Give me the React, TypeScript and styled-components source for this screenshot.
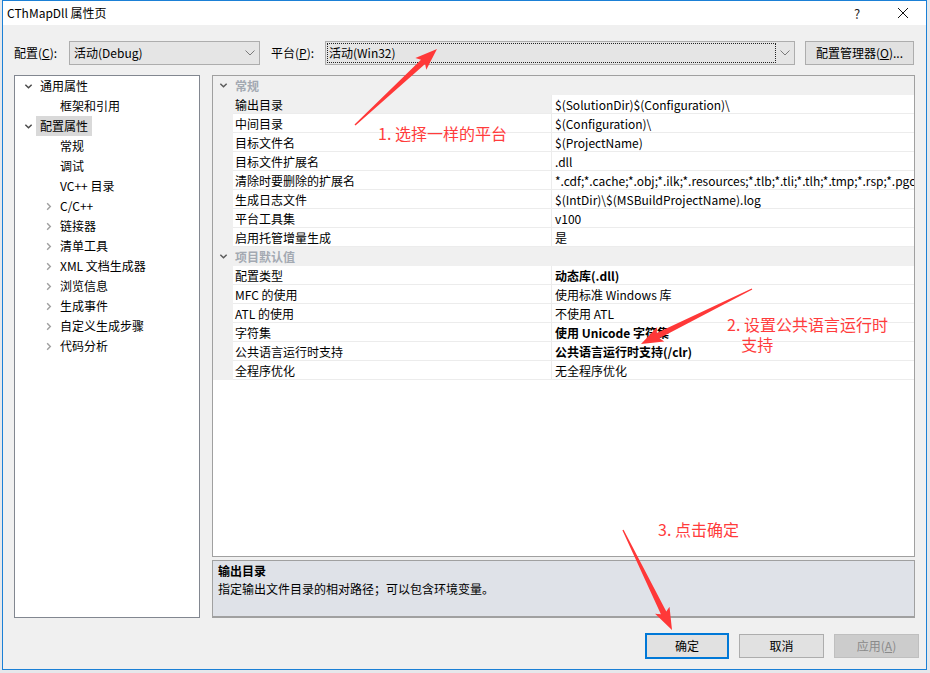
import React from 'react';
import styled, { createGlobalStyle } from 'styled-components';

// Global page setup
const GlobalStyle = createGlobalStyle`
  html, body {
    margin: 0;
    padding: 0;
    background: #e6e8eb;
  }
  body {
    font-family: "Noto Sans CJK SC", "Noto Sans", sans-serif;
    font-size: 12px;
    color: #000;
  }
`;

interface TreeNode {
  label: React.ReactNode;
  level: number;
  arrow?: 'open' | 'closed';
  selected?: boolean;
}

interface PropRow {
  name: string;
  value: string;
  bold?: boolean;
  selected?: boolean;
}

interface Section {
  title: string;
  rows: PropRow[];
}

const TREE: TreeNode[] = [
  { label: '通用属性', level: 0, arrow: 'open' },
  { label: '框架和引用', level: 1 },
  { label: '配置属性', level: 0, arrow: 'open', selected: true },
  { label: '常规', level: 1 },
  { label: '调试', level: 1 },
  { label: 'VC++ 目录', level: 1 },
  { label: 'C/C++', level: 1, arrow: 'closed' },
  { label: '链接器', level: 1, arrow: 'closed' },
  { label: '清单工具', level: 1, arrow: 'closed' },
  { label: 'XML 文档生成器', level: 1, arrow: 'closed' },
  { label: '浏览信息', level: 1, arrow: 'closed' },
  { label: '生成事件', level: 1, arrow: 'closed' },
  { label: '自定义生成步骤', level: 1, arrow: 'closed' },
  { label: '代码分析', level: 1, arrow: 'closed' },
];

const SECTIONS: Section[] = [
  {
    title: '常规',
    rows: [
      { name: '输出目录', value: '$(SolutionDir)$(Configuration)\\', selected: true },
      { name: '中间目录', value: '$(Configuration)\\' },
      { name: '目标文件名', value: '$(ProjectName)' },
      { name: '目标文件扩展名', value: '.dll' },
      {
        name: '清除时要删除的扩展名',
        value: '*.cdf;*.cache;*.obj;*.ilk;*.resources;*.tlb;*.tli;*.tlh;*.tmp;*.rsp;*.pgc;*.pgd;*.meta;$(TargetPath)',
      },
      { name: '生成日志文件', value: '$(IntDir)\\$(MSBuildProjectName).log' },
      { name: '平台工具集', value: 'v100' },
      { name: '启用托管增量生成', value: '是' },
    ],
  },
  {
    title: '项目默认值',
    rows: [
      { name: '配置类型', value: '动态库(.dll)', bold: true },
      { name: 'MFC 的使用', value: '使用标准 Windows 库' },
      { name: 'ATL 的使用', value: '不使用 ATL' },
      { name: '字符集', value: '使用 Unicode 字符集', bold: true },
      { name: '公共语言运行时支持', value: '公共语言运行时支持(/clr)', bold: true },
      { name: '全程序优化', value: '无全程序优化' },
    ],
  },
];

// Layout
const Page = styled.div`
  position: relative;
  width: 930px;
  height: 673px;
  overflow: hidden;
`;

const Window = styled.div`
  margin-left: 2px;
  width: 925px;
  height: 670px;
  box-sizing: border-box;
  border: 1px solid #1b80d6;
  background: #f0f0f0;
  display: flex;
  flex-direction: column;
`;

const TitleBar = styled.div`
  height: 24px;
  background: #fff;
  display: flex;
  align-items: center;
  padding-left: 4px;
`;

const TitleText = styled.span`
  flex: 1;
  font-size: 12px;
  padding-bottom: 2px;
`;

const TitleButton = styled.div`
  width: 46px;
  height: 24px;
  display: flex;
  align-items: center;
  justify-content: center;
  font-size: 13px;
  color: #222;
`;

const Client = styled.div`
  flex: 1;
  display: flex;
  flex-direction: column;
  padding: 0 7px 0 11px;
`;

const Toolbar = styled.div`
  margin-top: 16px;
  height: 24px;
  display: flex;
  align-items: center;
`;

const FieldLabel = styled.span<{ $w: number; $ml?: number }>`
  width: ${p => p.$w}px;
  margin-left: ${p => p.$ml ?? 0}px;
  padding-bottom: 2px;
  white-space: nowrap;
`;

const Combo = styled.div<{ $w: number }>`
  width: ${p => p.$w}px;
  height: 24px;
  box-sizing: border-box;
  border: 1px solid #adadad;
  background: #e5e5e5;
  display: flex;
  align-items: center;
`;

const ComboText = styled.div<{ $focus?: boolean }>`
  flex: 1;
  height: ${p => (p.$focus ? '20px' : 'auto')};
  box-sizing: border-box;
  margin: ${p => (p.$focus ? '0 0 0 1px' : '0')};
  padding-left: ${p => (p.$focus ? '1px' : '4px')};
  padding-bottom: 1px;
  border: ${p => (p.$focus ? '1px dotted #222' : 'none')};
  display: flex;
  align-items: center;
  white-space: nowrap;
`;

const ComboArrow = styled.div`
  width: 18px;
  display: flex;
  align-items: center;
  justify-content: center;
`;

const PushButton = styled.div<{ $w: number; $variant?: 'default' | 'disabled' }>`
  width: ${p => p.$w}px;
  height: ${p => (p.$variant === 'default' ? 26 : 24)}px;
  box-sizing: border-box;
  padding-bottom: 2px;
  border: ${p =>
    p.$variant === 'default' ? '2px solid #0078d7' : p.$variant === 'disabled' ? '1px solid #bfbfbf' : '1px solid #adadad'};
  background: ${p => (p.$variant === 'disabled' ? '#cccccc' : '#e1e1e1')};
  color: ${p => (p.$variant === 'disabled' ? '#8a8a8a' : '#000')};
  display: flex;
  align-items: center;
  justify-content: center;
  white-space: nowrap;
`;

const ManagerButton = styled(PushButton)`
  margin-left: 10px;
`;

const Main = styled.div`
  margin-top: 10px;
  height: 543px;
  width: 901px;
  display: flex;
  gap: 12px;
`;

// Tree
const TreePanel = styled.div`
  width: 186px;
  box-sizing: border-box;
  border: 1px solid #828790;
  background: #fff;
`;

const TreeRow = styled.div<{ $level: number }>`
  height: 20px;
  display: flex;
  align-items: center;
  padding-left: ${p => 5 + p.$level * 20}px;
`;

const TreeArrow = styled.div`
  width: 16px;
  height: 20px;
  display: flex;
  align-items: center;
  justify-content: center;
`;

const TreeLabel = styled.div<{ $selected?: boolean }>`
  height: 20px;
  box-sizing: border-box;
  padding: 0 4px 1px;
  display: flex;
  align-items: center;
  white-space: nowrap;
  background: ${p => (p.$selected ? '#d9d9d9' : 'transparent')};
`;

// Property grid
const RightCol = styled.div`
  width: 703px;
  display: flex;
  flex-direction: column;
`;

const GridPanel = styled.div`
  height: 482px;
  box-sizing: border-box;
  border: 1px solid #a0a0a0;
  background: #fff;
  overflow: hidden;
`;

const CategoryRow = styled.div`
  height: 19px;
  display: flex;
  align-items: center;
  background: #f0f0f0;
`;

const Margin = styled.div`
  width: 20px;
  height: 100%;
  flex: none;
  display: flex;
  align-items: center;
  justify-content: center;
  background: #f0f0f0;
`;

const CategoryTitle = styled.span`
  padding-left: 2px;
  padding-bottom: 1px;
  color: #a3a9b2;
  font-weight: 700;
`;

const PropLine = styled.div`
  height: 19px;
  display: flex;
`;

const NameCell = styled.div<{ $selected?: boolean }>`
  width: 319px;
  flex: none;
  box-sizing: border-box;
  padding-left: 2px;
  border-right: 1px solid #ececec;
  border-bottom: 1px solid #ececec;
  background: ${p => (p.$selected ? '#f0f0f0' : '#fff')};
  display: flex;
  align-items: center;
  white-space: nowrap;
`;

const ValueCell = styled.div<{ $bold?: boolean }>`
  flex: 1;
  min-width: 0;
  box-sizing: border-box;
  padding-left: 3px;
  border-bottom: 1px solid #ececec;
  display: flex;
  align-items: center;
  white-space: nowrap;
  overflow: hidden;
  font-weight: ${p => (p.$bold ? 700 : 400)};
`;

const DescPanel = styled.div`
  margin-top: 3px;
  height: 58px;
  box-sizing: border-box;
  border: 1px solid #a0a0a0;
  border-bottom-width: 2px;
  background: #dfe2e8;
  padding: 1px 5px;
`;

const DescTitle = styled.div`
  font-weight: 700;
  line-height: 18px;
`;

const DescText = styled.div`
  line-height: 18px;
`;

const ButtonRow = styled.div`
  margin-top: 15px;
  display: flex;
  justify-content: flex-end;
  align-items: center;
  gap: 10px;
`;

// Annotations (overlay)
const Overlay = styled.svg`
  position: absolute;
  left: 0;
  top: 0;
  width: 930px;
  height: 673px;
  pointer-events: none;
`;

const Note = styled.div<{ $x: number; $y: number }>`
  position: absolute;
  left: ${p => p.$x}px;
  top: ${p => p.$y}px;
  color: #ff3c3c;
  font-size: 16px;
  line-height: 20px;
  white-space: pre;
`;

const Chevron: React.FC<{ dir: 'down' | 'right'; color: string; size?: number }> = ({ dir, color, size = 9 }) => (
  <svg width={size} height={size} viewBox="0 0 10 10">
    {dir === 'down' ? (
      <polyline points="1.5,3 5,6.5 8.5,3" fill="none" stroke={color} strokeWidth="1.6" />
    ) : (
      <polyline points="3.5,1.5 7,5 3.5,8.5" fill="none" stroke={color} strokeWidth="1.6" />
    )}
  </svg>
);

const ComboChevron = () => (
  <svg width="10" height="6" viewBox="0 0 10 6">
    <polyline points="0.5,0.5 5,5 9.5,0.5" fill="none" stroke="#7a7a7a" strokeWidth="1" />
  </svg>
);

// tapered annotation arrow from tail to tip
function arrowPoints(tx: number, ty: number, px: number, py: number) {
  const head = 22;
  const barb = 8;
  const neck = 3;
  const tail = 0.7;
  const len = Math.hypot(px - tx, py - ty);
  const ux = (px - tx) / len;
  const uy = (py - ty) / len;
  const nx = -uy;
  const ny = ux;
  const hx = px - ux * (head - 3);
  const hy = py - uy * (head - 3);
  const bx = px - ux * head;
  const by = py - uy * head;
  const pts = [
    [tx + nx * tail, ty + ny * tail],
    [hx + nx * neck, hy + ny * neck],
    [bx + nx * barb, by + ny * barb],
    [px, py],
    [bx - nx * barb, by - ny * barb],
    [hx - nx * neck, hy - ny * neck],
    [tx - nx * tail, ty - ny * tail],
  ];
  return pts.map(p => `${p[0].toFixed(1)},${p[1].toFixed(1)}`).join(' ');
}

const ARROWS = [
  [355, 125, 437, 49],
  [752, 289, 641, 344],
  [623, 530, 672, 630],
];

const App: React.FC = () => {
  return (
    <Page>
      <GlobalStyle />
      <Window>
        <TitleBar>
          <TitleText>CThMapDll 属性页</TitleText>
          <TitleButton>?</TitleButton>
          <TitleButton>
            <svg width="12" height="12" viewBox="0 0 12 12">
              <path d="M1 1 L11 11 M11 1 L1 11" stroke="#111" strokeWidth="1" fill="none" />
            </svg>
          </TitleButton>
        </TitleBar>

        <Client>
          <Toolbar>
            <FieldLabel $w={55}>
              配置(<u>C</u>):
            </FieldLabel>
            <Combo $w={191}>
              <ComboText>活动(Debug)</ComboText>
              <ComboArrow>
                <ComboChevron />
              </ComboArrow>
            </Combo>
            <FieldLabel $w={54} $ml={11}>
              平台(<u>P</u>):
            </FieldLabel>
            <Combo $w={470}>
              <ComboText $focus>活动(Win32)</ComboText>
              <ComboArrow>
                <ComboChevron />
              </ComboArrow>
            </Combo>
            <ManagerButton $w={109}>
              配置管理器(<u>O</u>)...
            </ManagerButton>
          </Toolbar>

          <Main>
            <TreePanel>
              {TREE.map((node, i) => (
                <TreeRow key={i} $level={node.level}>
                  <TreeArrow>
                    {node.arrow === 'open' && <Chevron dir="down" color="#4a4a4a" />}
                    {node.arrow === 'closed' && <Chevron dir="right" color="#a0a0a0" />}
                  </TreeArrow>
                  <TreeLabel $selected={node.selected}>{node.label}</TreeLabel>
                </TreeRow>
              ))}
            </TreePanel>

            <RightCol>
              <GridPanel>
                {SECTIONS.map(section => (
                  <React.Fragment key={section.title}>
                    <CategoryRow>
                      <Margin>
                        <Chevron dir="down" color="#5a5a5a" />
                      </Margin>
                      <CategoryTitle>{section.title}</CategoryTitle>
                    </CategoryRow>
                    {section.rows.map(row => (
                      <PropLine key={row.name}>
                        <Margin />
                        <NameCell $selected={row.selected}>{row.name}</NameCell>
                        <ValueCell $bold={row.bold}>{row.value}</ValueCell>
                      </PropLine>
                    ))}
                  </React.Fragment>
                ))}
              </GridPanel>
              <DescPanel>
                <DescTitle>输出目录</DescTitle>
                <DescText>指定输出文件目录的相对路径；可以包含环境变量。</DescText>
              </DescPanel>
            </RightCol>
          </Main>

          <ButtonRow>
            <PushButton $w={84} $variant="default">确定</PushButton>
            <PushButton $w={85}>取消</PushButton>
            <PushButton $w={85} $variant="disabled">
              应用(<u>A</u>)
            </PushButton>
          </ButtonRow>
        </Client>
      </Window>

      <Overlay viewBox="0 0 930 673">
        {ARROWS.map((a, i) => (
          <polygon key={i} points={arrowPoints(a[0], a[1], a[2], a[3])} fill="#ff3838" />
        ))}
      </Overlay>
      <Note $x={378} $y={123}>1. 选择一样的平台</Note>
      <Note $x={727} $y={314}>{'2. 设置公共语言运行时\n    支持'}</Note>
      <Note $x={658} $y={519}>3. 点击确定</Note>
    </Page>
  );
};

export default App;
